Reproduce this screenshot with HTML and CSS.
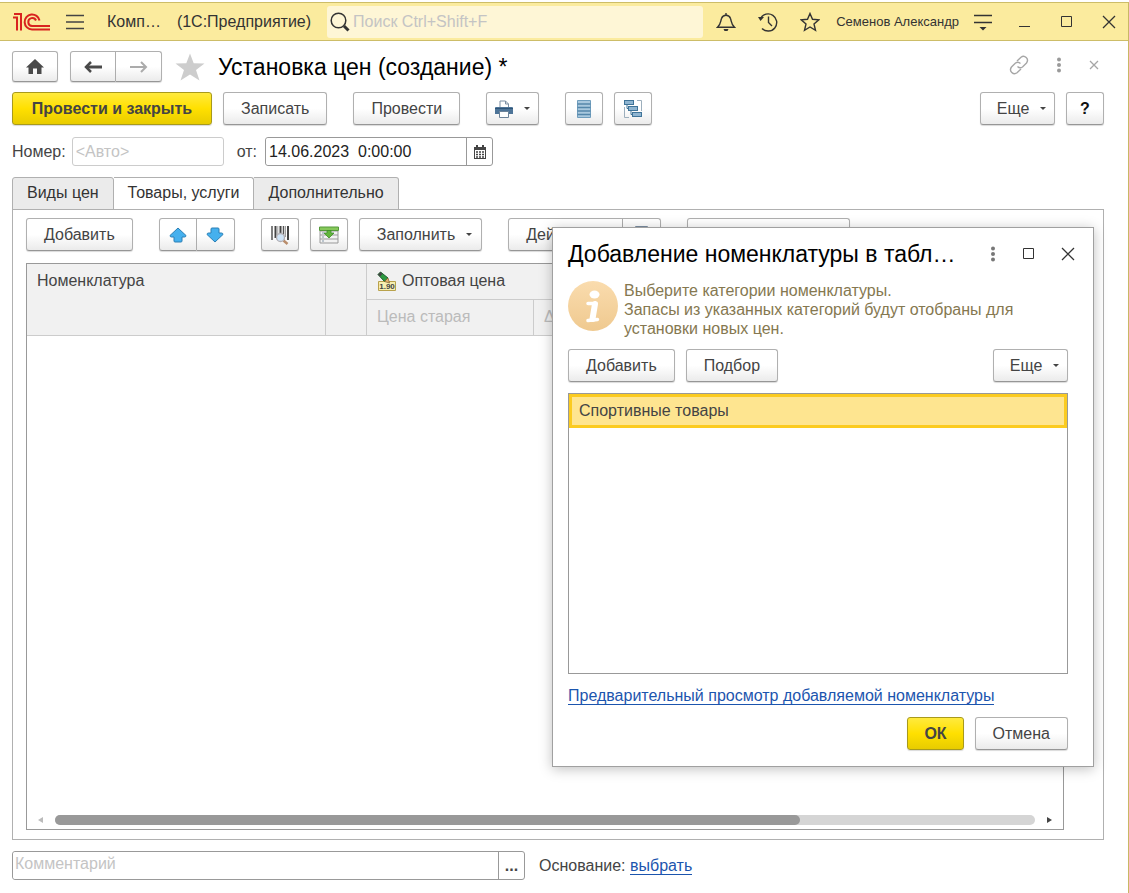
FILE: index.html
```html
<!DOCTYPE html>
<html lang="ru">
<head>
  <meta charset="UTF-8">
  <meta name="viewport" content="width=device-width, initial-scale=1.0">
  <title>Установка цен (создание) *</title>
  <link rel="stylesheet" href="styles.css">
</head>
<body>
  <div class="window">
    <!-- Title bar -->
    <header class="titlebar">
      <svg class="logo" width="38" height="20" viewBox="0 0 38 20" fill="none" stroke="#d9231f" stroke-width="2">
        <path d="M1 5.500H5V18.500M2 2H9V18.500"/>
        <path d="M27.500 8.500A7.500 7.500 0 1 0 20 17.500H38"/>
        <path d="M24 8.500A4 4 0 1 0 20 14H38"/>
      </svg>
      <button class="icon-btn menu" aria-label="Меню">
        <svg width="18" height="16" viewBox="0 0 18 16" stroke="#444" stroke-width="1.300"><path d="M0 1.500H18M0 8H18M0 14.500H18"/></svg>
      </button>
      <span class="app-name">Комп…</span>
      <span class="app-kind">(1С:Предприятие)</span>
      <label class="search">
        <svg width="20" height="20" viewBox="0 0 20 20" fill="none" stroke="#333"><circle cx="8.500" cy="8.500" r="7.300" stroke-width="1.500"/><path d="M14 14L18.500 18.500" stroke-width="3"/></svg>
        <input type="text" placeholder="Поиск Ctrl+Shift+F">
      </label>
      <div class="titlebar-tools">
        <button class="icon-btn" aria-label="Уведомления">
          <svg width="20" height="20" viewBox="0 0 20 20" fill="none" stroke="#333" stroke-width="1.400"><path d="M1.500 15.300C5 12 4.500 9 5.500 6.500C6.200 4.500 7.500 3.300 10 3.300C12.500 3.300 13.800 4.500 14.500 6.500C15.500 9 15 12 18.500 15.300Z"/><path d="M10 1V3"/><path d="M7.500 17H12.500L11.500 19H8.500Z" fill="#333" stroke="none"/></svg>
        </button>
        <button class="icon-btn" aria-label="История">
          <svg width="20" height="20" viewBox="0 0 20 20" fill="none" stroke="#333" stroke-width="1.400"><path d="M2.500 6.500A8.600 8.600 0 1 1 4 16.500M10.500 4.500V10.500L14 14"/><path d="M0 5H6L2.500 9Z" fill="#333" stroke="none"/></svg>
        </button>
        <button class="icon-btn" aria-label="Избранное">
          <svg width="20" height="20" viewBox="0 0 20 20" fill="none" stroke="#333" stroke-width="1.400"><path d="M10 1.500L12.500 7.300L18.800 7.800L14 12L15.500 18.300L10 15L4.500 18.300L6 12L1.200 7.800L7.500 7.300Z"/></svg>
        </button>
      </div>
      <span class="user">Семенов Александр</span>
      <button class="icon-btn" aria-label="Сервис">
        <svg width="18" height="18" viewBox="0 0 18 18" stroke="#333" stroke-width="1.400"><path d="M0 2.500H18M0 9.500H18"/><path d="M5.500 14H12.500L9 17.500Z" fill="#333" stroke="none"/></svg>
      </button>
      <div class="window-tools">
        <button class="icon-btn" aria-label="Свернуть">
          <svg width="14" height="14" viewBox="0 0 14 14" stroke="#333"><path d="M1 11.500H12"/></svg>
        </button>
        <button class="icon-btn" aria-label="Развернуть">
          <svg width="14" height="14" viewBox="0 0 14 14" fill="none" stroke="#333"><path d="M1.500 1.500H11.500V11.500H1.500Z"/></svg>
        </button>
        <button class="icon-btn" aria-label="Закрыть">
          <svg width="14" height="14" viewBox="0 0 14 14" stroke="#333" stroke-width="1.300"><path d="M1 1L13 13M13 1L1 13"/></svg>
        </button>
      </div>
    </header>

    <main class="form">
      <!-- Navigation and form title -->
      <div class="nav-row">
        <button class="btn nav-btn" aria-label="Начальная страница">
          <svg width="18" height="16" viewBox="0 0 18 16"><path d="M9 0L18 8.500H15.500V15H11V9.500H7V15H2.500V8.500H0Z" fill="#4a4a4a"/></svg>
        </button>
        <div class="btn-group">
          <button class="btn nav-btn" aria-label="Назад">
            <svg width="18" height="12" viewBox="0 0 18 12" fill="none" stroke="#4a4a4a" stroke-width="3"><path d="M2 6H18"/><path d="M7 1L2 6L7 11" stroke-width="2.500"/></svg>
          </button>
          <button class="btn nav-btn" aria-label="Вперед">
            <svg width="18" height="12" viewBox="0 0 18 12" fill="none" stroke="#ababab" stroke-width="2"><path d="M0 6H16"/><path d="M11 1L16 6L11 11"/></svg>
          </button>
        </div>
        <button class="icon-btn fav" aria-label="Добавить в избранное">
          <svg width="30" height="28" viewBox="0 0 30 28"><path d="M15 0.500L18.700 10.300L29.500 10.500L21 17L24.500 27.500L15 21.500L5.500 27.500L9 17L0.500 10.500L11.300 10.300Z" fill="#cdcdcd"/></svg>
        </button>
        <h1>Установка цен (создание) *</h1>
        <div class="form-tools">
          <button class="icon-btn" aria-label="Получить ссылку">
            <svg width="20" height="20" viewBox="0 0 20 20" fill="none" stroke="#a6a6a6" stroke-width="1.400"><path d="M8 6L12 2.200C15.500-0.500 20.500 4 17.500 8L13.500 12C12 13 10 13 8.500 11.500"/><path d="M12 14L8 17.800C4.500 20.500-0.500 16 2.500 12L6.500 8C8 7 10 7 11.500 8.500"/></svg>
          </button>
          <button class="icon-btn" aria-label="Дополнительно">
            <svg width="4" height="16" viewBox="0 0 4 16" fill="#9a9a9a"><circle cx="2" cy="2.500" r="2"/><circle cx="2" cy="8" r="2"/><circle cx="2" cy="13.500" r="2"/></svg>
          </button>
          <button class="icon-btn" aria-label="Закрыть форму">
            <svg width="10" height="10" viewBox="0 0 10 10" stroke="#a6a6a6" stroke-width="1.300"><path d="M1 1L9 9M9 1L1 9"/></svg>
          </button>
        </div>
      </div>

      <!-- Form commands -->
      <div class="command-row">
        <button class="btn primary post">Провести и закрыть</button>
        <button class="btn">Записать</button>
        <button class="btn spaced">Провести</button>
        <button class="btn print spaced" aria-label="Печать">
          <svg width="18" height="18" viewBox="0 0 18 18"><path d="M5 8V1H10.500L13.500 4V8" fill="#fff" stroke="#7c8fa3"/><path d="M10.500 1V4H13.500" fill="none" stroke="#7c8fa3"/><path d="M1 7H17Q18 7 18 8V14H0V8Q0 7 1 7Z" fill="#4d7498"/><path d="M0 8.500H18" stroke="#2f5578"/><path d="M4.500 11.500H13.500V17.500H4.500Z" fill="#fff" stroke="#6c8399"/></svg>
          <span class="arrow"></span>
        </button>
        <button class="btn square spaced" aria-label="Движения документа">
          <svg width="14" height="18" viewBox="0 0 14 18"><path d="M0.500 0.500H13.500V17.500H0.500Z" fill="#a9c8de" stroke="#6f9dbd"/><path d="M0.500 4H13.500M0.500 7.500H13.500M0.500 11H13.500M0.500 14.500H13.500" stroke="#5587ab" stroke-width="1.300"/></svg>
        </button>
        <button class="btn square" aria-label="Структура подчиненности">
          <svg width="18" height="18" viewBox="0 0 18 18" fill="none"><path d="M13 0.500H17.500V11M0.500 7V17.500H5" stroke="#9dafbd"/><path d="M3 5V8.500H5M7 11V14.500H9" stroke="#3f7499"/><g fill="#8fb5d1" stroke="#3f7499"><rect x="0.500" y="0.500" width="9" height="4"/><rect x="4.500" y="6.500" width="9" height="4"/><rect x="8.500" y="12.500" width="9" height="4"/></g></svg>
        </button>
        <button class="btn more push">Еще<span class="arrow"></span></button>
        <button class="btn square help">?</button>
      </div>

      <div class="field-row">
        <label for="number">Номер:</label>
        <input class="field number" id="number" type="text" placeholder="&lt;Авто&gt;">
        <label class="from" for="date">от:</label>
        <div class="field-group date">
          <input class="field" id="date" type="text" value="14.06.2023  0:00:00">
          <button class="field-btn" aria-label="Выбрать дату">
            <svg width="12" height="14" viewBox="0 0 12 14"><path d="M0 2H12V14H0Z" fill="#444"/><path d="M3 0V3M9 0V3" stroke="#444" stroke-width="2"/><path d="M1 5H11V13H1Z" fill="#fff"/><path d="M2 7H10M2 9.500H10M2 12H10" stroke="#444" stroke-width="1.500" stroke-dasharray="2 1"/></svg>
          </button>
        </div>
      </div>

      <div class="tabs" role="tablist">
        <button class="tab" role="tab">Виды цен</button>
        <button class="tab active" role="tab" aria-selected="true">Товары, услуги</button>
        <button class="tab" role="tab">Дополнительно</button>
      </div>

      <section class="panel">
        <div class="command-row">
          <button class="btn">Добавить</button>
          <div class="btn-group spaced">
            <button class="btn square" aria-label="Переместить вверх">
              <svg width="18" height="16" viewBox="0 0 18 16"><path d="M9 1L17 8.500Q17 10 15.500 10H13V14Q13 15 12 15H6Q5 15 5 14V10H2.500Q1 10 1 8.500Z" fill="#45b0ee" stroke="#2b7fb5"/></svg>
            </button>
            <button class="btn square" aria-label="Переместить вниз">
              <svg width="18" height="16" viewBox="0 0 18 16"><path d="M9 15L17 7.500Q17 6 15.500 6H13V2Q13 1 12 1H6Q5 1 5 2V6H2.500Q1 6 1 7.500Z" fill="#45b0ee" stroke="#2b7fb5"/></svg>
            </button>
          </div>
          <button class="btn square spaced" aria-label="Поиск по штрихкоду">
            <svg width="18" height="20" viewBox="0 0 18 20"><path d="M1 1V15M12.500 1V15" stroke="#555" stroke-width="1.500"/><path d="M4.500 1V13M9.500 1V9M17 1V15" stroke="#444" stroke-width="2"/><path d="M6.800 1V12M14.500 1V12" stroke="#888" stroke-width="0.800"/><path d="M12.500 15.500L16.500 19" stroke="#b98d6c" stroke-width="2.500"/><circle cx="9.500" cy="12.500" r="4" fill="#cfe4f7" stroke="#b3b0b5" stroke-width="1.300"/></svg>
          </button>
          <button class="btn square" aria-label="Заполнить таблицу">
            <svg width="20" height="18" viewBox="0 0 20 18"><path d="M1 5H19V17H1Z" fill="#f2f2f2" stroke="#999"/><path d="M1 9H19M1 13H19" stroke="#999"/><path d="M3 7H5M3 11H5M3 15H5" stroke="#8296a8"/><path d="M0.500 1H19.500V4.500H0.500Z" fill="#86c85a" stroke="#55993a"/><path d="M8 4.500H12V7H15L10 12L5 7H8Z" fill="#62b63c" stroke="#3d8d28" stroke-width="0.800"/></svg>
          </button>
          <button class="btn more">Заполнить<span class="arrow"></span></button>
          <div class="btn-group spaced">
            <button class="btn more">Действия<span class="arrow"></span></button>
            <button class="btn square" aria-label="Скопировать">
              <svg width="14" height="18" viewBox="0 0 14 18" fill="none" stroke="#7c8fa3"><path d="M0.500 0.500H12.500V17.500H0.500ZM3 3.500H10"/></svg>
            </button>
          </div>
          <input class="btn find spaced" type="search" aria-label="Поиск">
        </div>

        <div class="table-box">
          <table class="goods">
            <colgroup>
              <col class="col-name"><col class="col-mark"><col class="col-old"><col>
            </colgroup>
            <thead>
              <tr>
                <th rowspan="2">Номенклатура</th>
                <th rowspan="2"></th>
                <th colspan="2">
                  <span class="price-head">
                    <svg width="20" height="20" viewBox="0 0 20 20"><path d="M1.500 10.500H18.500V19.500H1.500Z" fill="#f7efb0" stroke="#b9a24c"/><text class="price-mark" x="10" y="18" text-anchor="middle">1.90</text><path d="M3.500 1L11 7L7.500 10.500L1 3.500Z" fill="#2d9a40" stroke="#1f5f2e"/><path d="M1 3.500L3.500 1L5.500 3L3 5.500Z" fill="#444"/><path d="M11 7L12.500 12L7.500 10.500Z" fill="#e2b36e" stroke="#7d5c2d" stroke-width="0.700"/></svg>
                    Оптовая цена
                  </span>
                </th>
              </tr>
              <tr class="sub">
                <th>Цена старая</th>
                <th>Δ</th>
              </tr>
            </thead>
          </table>
          <div class="scrollbar">
            <span class="scroll-left"></span>
            <div class="track"><div class="thumb"></div></div>
            <span class="scroll-right"></span>
          </div>
        </div>
      </section>

      <div class="footer-row">
        <div class="field-group comment">
          <input class="field" type="text" placeholder="Комментарий" aria-label="Комментарий">
          <button class="field-btn">...</button>
        </div>
        <span>Основание: <a href="#">выбрать</a></span>
      </div>
    </main>

    <!-- Category picker -->
    <div class="dialog" role="dialog" aria-labelledby="dialogTitle">
      <div class="dialog-head">
        <h2 id="dialogTitle">Добавление номенклатуры в табл…</h2>
        <button class="icon-btn" aria-label="Дополнительно">
          <svg width="4" height="16" viewBox="0 0 4 16" fill="#777"><circle cx="2" cy="2.500" r="2"/><circle cx="2" cy="8" r="2"/><circle cx="2" cy="13.500" r="2"/></svg>
        </button>
        <button class="icon-btn" aria-label="Развернуть">
          <svg width="12" height="12" viewBox="0 0 12 12" fill="none" stroke="#333"><path d="M1.500 0.500H11.500V10.500H1.500Z"/></svg>
        </button>
        <button class="icon-btn" aria-label="Закрыть">
          <svg width="14" height="14" viewBox="0 0 14 14" stroke="#333" stroke-width="1.300"><path d="M1 1L13 13M13 1L1 13"/></svg>
        </button>
      </div>
      <div class="hint">
        <svg width="50" height="50" viewBox="0 0 50 50">
          <defs><linearGradient id="infoFill" x1="0" y1="0" x2="0" y2="1"><stop offset="0" stop-color="#fadcae"/><stop offset="1" stop-color="#efc98f"/></linearGradient></defs>
          <circle cx="25" cy="25" r="25" fill="url(#infoFill)"/>
          <ellipse cx="26.500" cy="13.500" rx="5" ry="4" fill="#fff"/>
          <path d="M20 22.500H27.500L24 38.500M20 39.500L29.500 38.500" fill="none" stroke="#fff" stroke-width="3.500" stroke-linecap="round" stroke-linejoin="round"/>
          <path d="M27 23L24.500 38" stroke="#fff" stroke-width="6" stroke-linecap="round"/>
        </svg>
        <p>Выберите категории номенклатуры.<br>Запасы из указанных категорий будут отобраны для установки новых цен.</p>
      </div>
      <div class="command-row">
        <button class="btn">Добавить</button>
        <button class="btn">Подбор</button>
        <button class="btn more push">Еще<span class="arrow"></span></button>
      </div>
      <ul class="list">
        <li class="selected">Спортивные товары</li>
      </ul>
      <div class="preview"><a href="#">Предварительный просмотр добавляемой номенклатуры</a></div>
      <div class="command-row dialog-foot">
        <button class="btn primary">ОК</button>
        <button class="btn">Отмена</button>
      </div>
    </div>
  </div>
</body>
</html>
```

FILE: styles.css
```css
* {
  box-sizing: border-box;
}
body {
  margin: 0;
  padding-top: 2px;
  background: #fff;
  color: #444;
  font-family: "Liberation Sans", Arial, sans-serif;
  font-size: 16px;
  line-height: 19px;
}
button,
input {
  font: inherit;
  color: inherit;
}
svg {
  display: block;
  flex: none;
}
a {
  color: #1c55ae;
  text-decoration: none;
  border-bottom: 1px solid #1c55ae;
}
.window {
  position: relative;
  display: flex;
  flex-direction: column;
  min-height: calc(100vh - 2px);
  border-right: 1px solid #c8b865;
}

/* Title bar */
.titlebar {
  display: flex;
  align-items: center;
  height: 39px;
  padding: 0 12px;
  background: #fbeb9e;
  border-top: 1px solid #cdbd68;
  border-bottom: 1px solid #cdbd68;
  color: #333;
  white-space: nowrap;
}
.icon-btn {
  display: flex;
  padding: 0;
  border: none;
  background: none;
  cursor: pointer;
}
.menu {
  margin: 0 23px 0 16px;
}
.app-kind {
  margin: 0 16px;
}
.search {
  display: flex;
  flex: 1;
  align-items: center;
  gap: 3px;
  height: 32px;
  padding: 0 3px;
  background: #fef6d6;
  border-radius: 3px;
}
.search input {
  flex: 1;
  min-width: 0;
  padding: 0;
  border: none;
  background: none;
  outline: none;
}
input::placeholder {
  color: #c4c4c4;
  opacity: 1;
}
.titlebar-tools {
  display: flex;
  gap: 22px;
  margin: 0 16px 0 13px;
}
.user {
  margin-right: 15px;
  font-size: 13px;
}
.window-tools {
  display: flex;
  gap: 28px;
  margin-left: 26px;
}

/* Form */
.form {
  display: flex;
  flex: 1;
  flex-direction: column;
  padding: 10px 24px 13px 12px;
}
.nav-row {
  display: flex;
  align-items: center;
  height: 31px;
}
.btn {
  display: flex;
  align-items: center;
  justify-content: center;
  height: 33px;
  padding: 0 17px;
  border: 1px solid #b0b0b0;
  border-bottom-color: #969696;
  border-radius: 3px;
  background: linear-gradient(#fff 50%, #ebebeb);
  box-shadow: 0 1px 1px rgba(0, 0, 0, 0.15);
  white-space: nowrap;
  cursor: pointer;
}
.btn.primary {
  padding: 0 16px;
  border-color: #a89a1c;
  background: linear-gradient(#ffea3e, #ffe000 50%, #e8cc00);
  color: #444;
  font-weight: bold;
}
.btn.post {
  min-width: 200px;
}
.btn.square {
  width: 38px;
  padding: 0;
}
.btn.print {
  width: 53px;
  padding: 0;
  gap: 11px;
}
.btn.more {
  gap: 11px;
  padding-right: 9px;
}
.btn.push {
  width: 75px;
  margin-left: auto;
}
.btn.help {
  color: #111;
  font-weight: bold;
}
.btn.nav-btn {
  width: 46px;
  height: 31px;
  padding: 0;
}
.btn-group {
  display: flex;
}
.btn-group .btn:first-child {
  border-radius: 3px 0 0 3px;
}
.btn-group .btn:last-child {
  border-left: none;
  border-radius: 0 3px 3px 0;
}
.arrow {
  border: 3px solid transparent;
  border-top-color: #444;
  border-bottom: none;
}
.nav-row .btn-group {
  margin: 0 13px 0 12px;
}
h1,
h2 {
  margin: 0;
  color: #000;
  font-size: 23px;
  line-height: 28px;
  font-weight: normal;
  white-space: nowrap;
}
h1 {
  margin-left: 13px;
}
.form-tools {
  display: flex;
  align-items: center;
  gap: 28px;
  margin-left: auto;
  padding: 0 5px 4px 0;
}
.command-row {
  display: flex;
  gap: 11px;
}
.form > .command-row {
  margin-top: 10px;
}
.spaced {
  margin-left: 15px;
}

/* Fields */
.field-row {
  display: flex;
  align-items: center;
  margin-top: 12px;
}
.field {
  height: 29px;
  padding: 0 3px;
  border: 1px solid #999;
  border-radius: 3px;
  background: #fff;
  color: #222;
}
.number {
  width: 152px;
  margin: 0 13px 0 6px;
  border-color: #ccc;
}
.from {
  margin-right: 8px;
}
.field-group {
  display: flex;
  height: 29px;
  border: 1px solid #999;
  border-radius: 3px;
}
.field-group .field {
  flex: 1;
  min-width: 0;
  height: 27px;
  border: none;
}
.field-btn {
  display: flex;
  align-items: center;
  justify-content: center;
  width: 26px;
  padding: 0;
  border: none;
  border-left: 1px solid #999;
  background: none;
  cursor: pointer;
}
.date {
  width: 228px;
}

/* Tabs */
.tabs {
  display: flex;
  margin-top: 11px;
}
.tab {
  height: 33px;
  margin-bottom: -1px;
  padding: 0 14px 2px;
  border: 1px solid #b0b0b0;
  border-left: none;
  border-radius: 0 3px 0 0;
  background: #ebebeb;
  color: #333;
  cursor: pointer;
}
.tab:first-child {
  border-left: 1px solid #b0b0b0;
  border-radius: 3px 3px 0 0;
}
.tab.active {
  border-bottom-color: #fff;
  background: #fff;
}
.panel {
  display: flex;
  flex: 1;
  flex-direction: column;
  gap: 12px;
  padding: 8px 39px 9px 13px;
  border: 1px solid #b0b0b0;
}
.find {
  width: 163px;
}

/* Goods table */
.table-box {
  display: flex;
  flex: 1;
  flex-direction: column;
  justify-content: space-between;
  border: 1px solid #999;
}
.goods {
  width: 100%;
  border-collapse: separate;
  border-spacing: 0;
  table-layout: fixed;
}
.goods th {
  height: 36px;
  padding: 7px 10px;
  border-right: 1px solid #ccc;
  border-bottom: 1px solid #ccc;
  background: #f1f1f1;
  font-weight: normal;
  text-align: left;
  vertical-align: top;
}
.goods th:last-child {
  border-right: none;
}
.goods .sub th {
  color: #bbb;
}
.col-name {
  width: 299px;
}
.col-mark {
  width: 41px;
}
.col-old {
  width: 167px;
}
.price-head {
  display: flex;
  height: 19px;
  gap: 5px;
}
.price-mark {
  font-size: 8px;
  font-weight: bold;
  fill: #444;
}
.scrollbar {
  display: flex;
  align-items: center;
  gap: 12px;
  padding: 4px 11px;
}
.track {
  flex: 1;
  height: 10px;
  border-radius: 5px;
  background: #d5d5d5;
}
.thumb {
  width: 76%;
  height: 10px;
  border-radius: 5px;
  background: #999;
}
.scroll-left,
.scroll-right {
  border: 3px solid transparent;
}
.scroll-left {
  border-left: none;
  border-right: 5px solid #bbb;
}
.scroll-right {
  border-right: none;
  border-left: 5px solid #444;
}
.footer-row {
  display: flex;
  align-items: center;
  gap: 14px;
  margin-top: 11px;
}
.comment {
  width: 513px;
}
.comment .field {
  padding: 0 2px 4px;
}
.comment .field-btn {
  font-weight: bold;
}

/* Dialog */
.dialog {
  position: absolute;
  top: 225px;
  right: 34px;
  display: flex;
  flex-direction: column;
  width: 542px;
  height: 540px;
  padding: 12px 25px 16px 15px;
  border: 1px solid #a0a0a0;
  background: #fff;
  box-shadow: 0 2px 12px rgba(0, 0, 0, 0.25);
}
.dialog-head {
  display: flex;
  align-items: center;
  gap: 27px;
  margin-right: -7px;
}
.dialog-head h2 {
  flex: 1;
}
.hint {
  display: flex;
  gap: 6px;
  margin: 13px 0 11px;
  color: #857850;
}
.hint p {
  margin: 0;
}
.list {
  flex: 1;
  margin: 11px 0 12px;
  padding: 0;
  border: 1px solid #999;
  list-style: none;
}
.list .selected {
  padding: 4px 7px 5px;
  border: 3px solid #fbcb20;
  background: #fee590;
}
.dialog-foot {
  justify-content: flex-end;
  margin-top: 12px;
}
```
